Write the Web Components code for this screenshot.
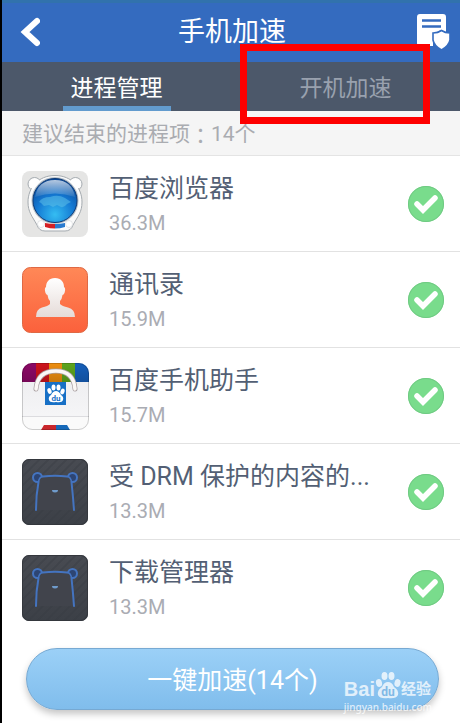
<!DOCTYPE html>
<html lang="zh-CN">
<head>
<meta charset="utf-8">
<meta name="viewport" content="width=device-width, initial-scale=1">
<title>手机加速</title>
<style>
html{background:#fff}
body{margin:0;font-family:Roboto,"Noto Sans CJK SC",sans-serif}
</style>
</head>
<body>
<speed-app>
  <app-header>手机加速</app-header>
  <tab-bar></tab-bar>
  <section-title count="14">建议结束的进程项</section-title>
  <process-row size="36.3M" icon="browser">百度浏览器</process-row>
  <process-row size="15.9M" icon="contacts">通讯录</process-row>
  <process-row size="15.7M" icon="store">百度手机助手</process-row>
  <process-row size="13.3M" icon="bear">受 DRM 保护的内容的...</process-row>
  <process-row size="13.3M" icon="bear">下载管理器</process-row>
  <boost-button>一键加速(14个)</boost-button>
  <highlight-frame></highlight-frame>
  <water-mark></water-mark>
</speed-app>
<script>
const define = (name, html, setup) => customElements.define(name, class extends HTMLElement {
  constructor() {
    super();
    const t = document.createElement('template');
    t.innerHTML = html;
    this.attachShadow({mode: 'open'}).append(t.content.cloneNode(true));
  }
  connectedCallback() { if (setup) setup(this, this.shadowRoot); }
});

define('speed-app', `
<style>
:host{display:flex;flex-direction:column;position:relative;box-sizing:border-box;min-height:100vh;border-left:2px solid #000;background:#fff}
</style><slot></slot>`);

define('app-header', `
<style>
:host{display:grid;grid-template-columns:1fr auto 1fr;align-items:center;box-sizing:border-box;height:62px;padding:0 10px 2px 12px;border-top:3px solid #3172ad;background:#346bbf;color:#fff}
h1{margin:0;font-size:27px;line-height:36px;font-weight:400}
button{border:0;background:none;padding:0;color:inherit;display:flex}
.back{justify-self:start;padding:0 6px}
.log{justify-self:end}
svg{display:block}
</style>
<button class="back" aria-label="返回"><svg width="20" height="32" viewBox="0 0 20 32"><path d="M17 5 5 16 17 27" fill="none" stroke="#fff" stroke-width="6" stroke-linecap="round" stroke-linejoin="miter"/></svg></button>
<h1><slot></slot></h1>
<button class="log" aria-label="保护记录"><svg width="34" height="36" viewBox="0 0 34 36"><path d="M4 0H27Q30 0 30 3V18L25 16L17 20V32H3Q1 32 1 29V3Q1 0 4 0Z" fill="#fff"/><path d="M6 6.500H25M6 12.500H25" stroke="#346bbf" stroke-width="2.400"/><path d="M25.500 16.500Q29 19 34 19V26Q33 32 25.500 36Q18 32 17 26V19Q22 19 25.500 16.500Z" fill="#fff" stroke="#346bbf" stroke-width="1.600"/></svg></button>`);

define('tab-bar', `
<style>
:host{display:block;background:#4c586a}
div{display:grid;grid-template-columns:1fr 1fr;justify-items:center}
button{box-sizing:border-box;height:49px;padding:9px 8px 0;border:0;border-bottom:5px solid transparent;background:none;font:inherit;font-size:23px;line-height:32px;color:#99a1ae}
button[aria-selected=true]{color:#fff;border-color:#629bce}
</style>
<div role="tablist"><button role="tab" aria-selected="true">进程管理</button><button role="tab" aria-selected="false">开机加速</button></div>`,
(el, root) => {
  const tabs = [...root.querySelectorAll('button')];
  tabs.forEach(b => b.onclick = () => tabs.forEach(t => t.setAttribute('aria-selected', t === b)));
});

define('section-title', `
<style>
:host{display:block;background:#f5f5f5;border-bottom:1px solid #e4e4e4;color:#aaacb1}
h2{display:flex;margin:0;padding:7px 20px 5px;font-size:21px;line-height:32px;font-weight:400}
.colon{font-family:"Noto Sans CJK TC",sans-serif}
</style>
<h2><slot></slot><span class="colon" lang="zh-TW">：</span><span class="count"></span></h2>`,
(el, root) => root.querySelector('.count').textContent = el.getAttribute('count') + '个');

const icons = {
browser: `
<defs><radialGradient id="g" cx=".5" cy=".82" r=".85"><stop offset="0" stop-color="#35bdf2"/><stop offset=".5" stop-color="#1479d3"/><stop offset="1" stop-color="#08418f"/></radialGradient><linearGradient id="s" x2="0" y2="1"><stop stop-color="#fff" stop-opacity=".7"/><stop offset="1" stop-color="#fff" stop-opacity=".08"/></linearGradient></defs>
<rect width="66" height="66" rx="8" fill="#e5e5e4"/>
<g fill="#fafafa" stroke="#a5abb0" stroke-width="1"><circle cx="12.500" cy="13" r="6.500"/><circle cx="53.500" cy="13" r="6.500"/><path d="M33 4.500C50 4.500 60 17 60 31C60 41 56 45 51 54Q49 60 43 60H23Q17 60 15 54C10 45 6 41 6 31C6 17 16 4.500 33 4.500Z"/></g>
<g fill="#fff"><circle cx="13" cy="13" r="5.500"/><circle cx="53" cy="13" r="5.500"/></g>
<circle cx="33" cy="29.500" r="23.500" fill="#b5bec6"/><circle cx="33" cy="29.500" r="22" fill="url(#g)" stroke="#0b3977"/>
<path d="M17 31Q20 26 28 26Q36 23 43 27L49 31L45 33Q42 37 39 36L35 34L31 36L27 34L22 35L19 32Z" fill="#5cc0e8" opacity=".55"/>
<path d="M13 26Q16 9 33 9Q50 9 53 26Q33 19 13 26Z" fill="url(#s)"/>
<path d="M20 51.500Q33 54 46 51.500L45 57Q33 59 21 57Z" fill="#fff"/><path d="M23 52Q28 53 33 53V57.500Q28 57.500 23 56Z" fill="#d52024"/><path d="M33 53Q38 53 43 52V56Q38 57.500 33 57.500Z" fill="#2a7bd0"/>
<circle cx="19" cy="53" r="3.500" fill="#fff" stroke="#c9cdd0" stroke-width=".5"/><circle cx="47" cy="53" r="3.500" fill="#fff" stroke="#c9cdd0" stroke-width=".5"/>`,
contacts: `
<defs><linearGradient id="g" x2="0" y2="1"><stop stop-color="#ff8857"/><stop offset="1" stop-color="#fb613c"/></linearGradient><linearGradient id="p" x2="0" y2="1"><stop stop-color="#fff"/><stop offset="1" stop-color="#e5dbd8"/></linearGradient></defs>
<rect x=".5" y=".5" width="65" height="65" rx="8" fill="url(#g)" stroke="#df6944"/>
<path d="M33 11C39 11 42 15 42 20Q44 21 42.500 26Q41.500 28 40.500 28Q40 32 38 34V37Q40 39 46 40.500Q53 42 53 50H14Q14 42 20 40.500Q26 39 28 37V34Q26 32 25.500 28Q24.500 28 23.500 26Q22 21 24 20C24 15 27 11 33 11Z" fill="url(#p)"/>`,
store: `
<defs><clipPath id="c"><rect width="67" height="67" rx="10"/></clipPath><linearGradient id="g" x2="0" y2="1"><stop stop-color="#ebebee"/><stop offset="1" stop-color="#f8f8f9"/></linearGradient><linearGradient id="d" x2="0" y2="1"><stop stop-color="#000" stop-opacity=".05"/><stop offset="1" stop-color="#000" stop-opacity=".2"/></linearGradient></defs>
<g clip-path="url(#c)"><rect width="67" height="67" fill="url(#g)"/>
<rect width="14" height="19" fill="#94096c"/><rect x="14" width="13" height="19" fill="#d9151d"/><rect x="27" width="13" height="19" fill="#fa9510"/><rect x="40" width="13" height="19" fill="#62ae1f"/><rect x="53" width="14" height="19" fill="#1764c4"/><rect width="67" height="19" fill="url(#d)"/>
<rect y="53" width="67" height="14" fill="#fafafa"/><path d="M0 53.500H67" stroke="#dcdcdf"/>
<path d="M22 62H34V67H19Z" fill="#c9272c"/><path d="M34 62H45L48 67H34Z" fill="#1769b9"/></g>
<rect x=".5" y=".5" width="66" height="66" rx="10" fill="none" stroke="#000" stroke-opacity=".18"/>
<rect x="23" y="19" width="21" height="23" fill="#1770c6"/>
<g fill="#fff"><ellipse cx="27.500" cy="28" rx="2" ry="3" transform="rotate(-20 27.500 28)"/><ellipse cx="31.500" cy="24.500" rx="2" ry="3"/><ellipse cx="36.500" cy="24.500" rx="2" ry="3"/><ellipse cx="40.500" cy="28.500" rx="2" ry="3" transform="rotate(20 40.500 28.500)"/><path d="M34 28Q37 28 39 32Q42 34 41 37Q40 40 34 39Q28 40 27 37Q26 34 29 32Q31 28 34 28Z"/></g>
<text x="34" y="38" text-anchor="middle" font-family="Roboto" font-size="8" font-weight="700" fill="#1770c6">du</text>
<path d="M14 26C15 13 23 8 34 8S52 13 53 26" fill="none" stroke="#a9a0a2" stroke-width="5" stroke-linecap="round"/><path d="M14 26C15 13 23 8 34 8S52 13 53 26" fill="none" stroke="#fbf7f5" stroke-width="3.500" stroke-linecap="round"/>`,
bear: `
<defs><pattern id="h" width="9" height="9" patternUnits="userSpaceOnUse"><path d="M-2 11 11-2M-2 2 2-2M7 11 11 7" stroke="#363a41" stroke-width="2"/></pattern><linearGradient id="g" x2="0" y2="1"><stop stop-color="#484b52"/><stop offset="1" stop-color="#3c4047"/></linearGradient></defs>
<rect width="66" height="66" rx="7" fill="url(#g)"/><rect width="66" height="66" rx="7" fill="url(#h)" opacity=".35"/><rect x=".5" y=".5" width="65" height="65" rx="7" fill="none" stroke="#34373d"/>
<g stroke="#4474c0" stroke-width="2"><circle cx="15.500" cy="18.500" r="4.500" fill="#2d4573"/><circle cx="50.500" cy="18.500" r="4.500" fill="#2d4573"/></g>
<path d="M14 51Q14 36 17 23Q17 18 21 17.500Q33 16 45 17.500Q49 18 49.500 23Q51 37 52 51" fill="#41444c"/>
<path d="M14 51Q14 36 16.500 23M21 17.500Q33 16 45 17.500M49.500 23Q51 37 52 51" fill="none" stroke="#4474c0" stroke-width="2" stroke-linecap="round"/>
<path d="M16.500 23Q17 18 21 17.500M45 17.500Q49 18 49.500 23" fill="none" stroke="#4474c0" stroke-width="1.500"/>
<path d="M30 31H36Q36 33.500 33 33.500Q30 33.500 30 31Z" fill="#6f9bcb"/>`
};

define('process-row', `
<style>
:host{display:block;border-bottom:1px solid #e2e2e2}
:host(:nth-of-type(5)){border-bottom:0}
label{display:grid;grid-template-columns:67px minmax(0,1fr) 36px;column-gap:20px;align-items:center;padding:14px 16px 13px 20px}
.icon svg{display:block;overflow:visible}
.name,.size{display:block;white-space:nowrap}
.name{font-size:25px;line-height:38px;color:#535f74}
.size{font-size:20px;line-height:30px;color:#aaacb3}
.check{display:grid}
.check>*{grid-area:1/1}
input{appearance:none;margin:0;width:36px;height:36px;border-radius:50%;background:#d8dadd}
input:checked{background:#79dc8c}
.check svg{pointer-events:none;visibility:hidden}
input:checked+svg{visibility:visible}
</style>
<label><span class="icon"></span><span><span class="name"><slot></slot></span><span class="size"></span></span>
<span class="check"><input type="checkbox" checked><svg width="36" height="36" viewBox="0 0 36 36"><circle cx="18" cy="18" r="17.500" fill="none" stroke="#70c983"/><path d="M9 18 15 24 27 12" fill="none" stroke="#fff" stroke-width="5.500" stroke-linecap="round"/></svg></span></label>`,
(el, root) => {
  root.querySelector('.size').textContent = el.getAttribute('size');
  root.querySelector('.icon').innerHTML = '<svg width="67" height="67" viewBox="0 0 67 67" aria-hidden="true">' + icons[el.getAttribute('icon')] + '</svg>';
});

define('boost-button', `
<style>
:host{display:flex;padding:13px 21px 13px 24px}
button{flex:1;height:62px;padding:3px 0 0;border:1px solid #77a9d2;border-radius:31px;background:linear-gradient(#9bd0f7,#80bdec);box-shadow:0 4px 7px #0000003a;font:inherit;font-size:25px;line-height:34px;color:#fff}
</style><button><slot></slot></button>`);

define('highlight-frame', `
<style>
:host{position:absolute;top:44px;right:30px;width:190px;height:80px;box-sizing:border-box;border:7px solid #fe0000;pointer-events:none}
</style>`);

define('water-mark', `
<style>
:host{position:absolute;right:28px;bottom:10px;color:#fff;opacity:.75;pointer-events:none;font-family:"Liberation Sans","Noto Sans CJK SC",sans-serif}
.brand{display:flex;align-items:flex-end;height:30px}
b{font-size:20px;line-height:24px}
.cn{font-size:15px;line-height:24px;font-weight:700}
svg{display:block}
.url{font-family:"Noto Sans",sans-serif;font-size:10px;line-height:12px;font-weight:500;text-align:right}
</style>
<div class="brand"><b>Bai</b><svg width="26" height="30" viewBox="0 0 26 30"><g fill="#fff"><ellipse cx="4" cy="12" rx="3" ry="4" transform="rotate(-15 4 12)"/><ellipse cx="9.500" cy="5" rx="3" ry="4"/><ellipse cx="16.500" cy="5" rx="3" ry="4"/><ellipse cx="22.500" cy="12" rx="3" ry="4" transform="rotate(15 22.500 12)"/><path d="M13 11Q17 11 19 16Q24 19 23 24Q21 28 13 27Q5 28 3 24Q2 19 7 16Q9 11 13 11Z"/></g><text x="13" y="25" text-anchor="middle" font-family="Roboto" font-weight="700" font-size="12" fill="#7db5e2">du</text></svg><span class="cn">经验</span></div>
<div class="url">jingyan.baidu.com</div>`);
</script>
</body>
</html>
